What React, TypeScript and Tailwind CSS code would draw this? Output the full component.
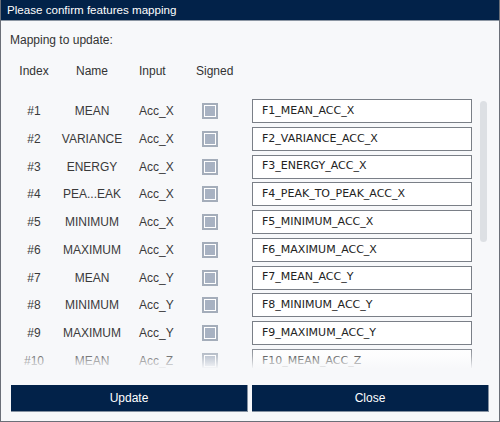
import React from "react";

type Row = { index: string; name: string; input: string; value: string };

const rows: Row[] = [
  { index: "#1", name: "MEAN", input: "Acc_X", value: "F1_MEAN_ACC_X" },
  { index: "#2", name: "VARIANCE", input: "Acc_X", value: "F2_VARIANCE_ACC_X" },
  { index: "#3", name: "ENERGY", input: "Acc_X", value: "F3_ENERGY_ACC_X" },
  { index: "#4", name: "PEA...EAK", input: "Acc_X", value: "F4_PEAK_TO_PEAK_ACC_X" },
  { index: "#5", name: "MINIMUM", input: "Acc_X", value: "F5_MINIMUM_ACC_X" },
  { index: "#6", name: "MAXIMUM", input: "Acc_X", value: "F6_MAXIMUM_ACC_X" },
  { index: "#7", name: "MEAN", input: "Acc_Y", value: "F7_MEAN_ACC_Y" },
  { index: "#8", name: "MINIMUM", input: "Acc_Y", value: "F8_MINIMUM_ACC_Y" },
  { index: "#9", name: "MAXIMUM", input: "Acc_Y", value: "F9_MAXIMUM_ACC_Y" },
  { index: "#10", name: "MEAN", input: "Acc_Z", value: "F10_MEAN_ACC_Z" },
];

function Checkbox() {
  return (
    <div className="w-[16px] h-[16px] border-2 border-[#a4adba] bg-white p-[1px]">
      <div className="w-full h-full bg-[#a8b2c2]" />
    </div>
  );
}

export default function App() {
  return (
    <div className="w-[500px] h-[422px] flex flex-col bg-[#f7f8fa] border-x border-b border-[#6b6f78] font-['Liberation_Sans',Arial,sans-serif] text-[12px] text-[#3a3a3a]">
      <div className="h-[21px] shrink-0 bg-[#022249] border-b border-[#8c96a3] text-white text-[11.6px] pl-[6px] flex items-center">
        Please confirm features mapping
      </div>

      <div className="pl-[9px] pt-[12px] leading-[14px] text-[#333]">Mapping to update:</div>

      {/* header */}
      <div className="flex mt-[17px] pl-[9px] leading-[14px] text-[#333]">
        <div className="w-[48px] text-center">Index</div>
        <div className="w-[68px] text-center">Name</div>
        <div className="w-[60px] pl-[13px]">Input</div>
        <div className="w-[66px] pl-[10px]">Signed</div>
      </div>

      {/* list */}
      <div className="relative mt-[19px] h-[271px] flex overflow-hidden pl-[9px]">
        <div className="flex flex-col gap-[3.75px] pt-[2px]">
          {rows.map((r) => (
            <div key={r.index} className="h-[24px] shrink-0 flex items-center">
              <div className="w-[48px] text-center">{r.index}</div>
              <div className="w-[68px] text-center">{r.name}</div>
              <div className="w-[60px] pl-[13px]">{r.input}</div>
              <div className="w-[66px] pl-[16px]">
                <Checkbox />
              </div>
              <div className="w-[220px] h-[24px] border border-[#7a7f87] bg-white flex items-center pl-[9px] font-['DejaVu_Sans',Verdana,sans-serif] text-[11px] text-[#222]">
                {r.value}
              </div>
            </div>
          ))}
        </div>
        <div className="ml-[8px] pt-[4px]">
          <div className="w-[7px] h-[141px] rounded-full bg-[#dde0e4]" />
        </div>
        <div className="absolute left-0 right-0 bottom-0 h-[24px] bg-gradient-to-b from-[#f7f8fa]/0 via-[#f7f8fa]/30 to-[#f7f8fa]/95" />
      </div>

      {/* buttons */}
      <div className="flex gap-[4px] pl-[10px] mt-[17px]">
        <button className="w-[237px] h-[27px] bg-[#022249] text-white text-[12px] border-r border-b border-[#8591a1]">
          Update
        </button>
        <button className="w-[237px] h-[27px] bg-[#022249] text-white text-[12px] border-r border-b border-[#8591a1]">
          Close
        </button>
      </div>
    </div>
  );
}
